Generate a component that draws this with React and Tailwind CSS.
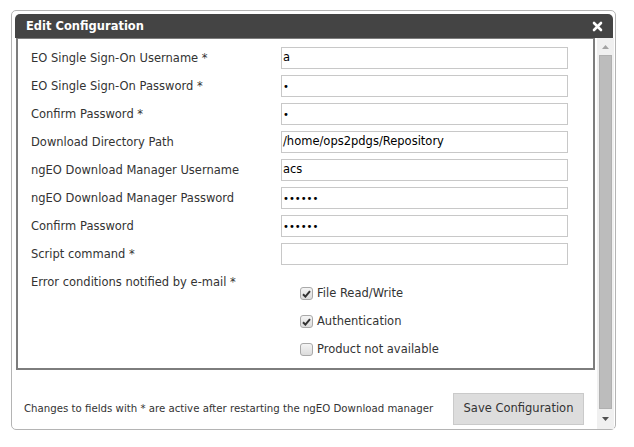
import React from 'react'

const rows = [
  { label: 'EO Single Sign-On Username *', value: 'a' },
  { label: 'EO Single Sign-On Password *', value: '•', secret: true },
  { label: 'Confirm Password *', value: '•', secret: true },
  { label: 'Download Directory Path', value: '/home/ops2pdgs/Repository' },
  { label: 'ngEO Download Manager Username', value: 'acs' },
  { label: 'ngEO Download Manager Password', value: '••••••', secret: true },
  { label: 'Confirm Password', value: '••••••', secret: true },
  { label: 'Script command *', value: '' },
]

const checks = [
  { label: 'File Read/Write', checked: true },
  { label: 'Authentication', checked: true },
  { label: 'Product not available', checked: false },
]

function Check({ checked }) {
  return (
    <div className="w-[13px] h-[13px] rounded-[3px] border border-[#a9a9a9] bg-gradient-to-b from-[#f4f4f4] to-[#dcdcdc] flex items-center justify-center">
      {checked && (
        <svg width="9" height="8" viewBox="0 0 9 8">
          <path d="M1 4.2 L3.4 6.6 L8 1.2" fill="none" stroke="#333" strokeWidth="2" />
        </svg>
      )}
    </div>
  )
}

export default function App() {
  return (
    <div className="w-[634px] h-[447px] bg-white pt-[10px] pl-[11px] font-['DejaVu_Sans',Verdana,sans-serif] text-[#333]">
      <div className="w-[605px] h-[420px] border border-[#b4b4b4] rounded-[5px] pl-[3px] pt-[3px] flex flex-col">
        {/* title bar */}
        <div className="h-[24px] mr-[2px] bg-[#444] rounded-t-[5px] flex items-center justify-between pl-[11px] pr-[10px]">
          <span className="text-white font-bold text-[11.5px] pt-[1px]">Edit Configuration</span>
          <svg width="11" height="11" viewBox="0 0 11 11">
            <path d="M2 2 L9 9 M9 2 L2 9" stroke="#fff" strokeWidth="2.6" strokeLinecap="round" />
          </svg>
        </div>

        <div className="flex flex-1 min-h-0">
          {/* scroll content */}
          <div className="w-[582px] flex flex-col">
            <div className="ml-[1px] mr-[2px] h-[332px] border-2 border-t border-[#7d7d7d] pt-[8px] pl-[13px]">
              {rows.map((r) => (
                <div key={r.label} className="flex items-center h-[22px] mb-[6px]">
                  <div className="w-[250px] text-[11.5px] pt-[1px]">{r.label}</div>
                  <div className={`w-[287px] h-[22px] border border-[#c8c8c8] flex items-center pl-[1px] text-black ${r.secret ? 'text-[10px]' : 'text-[11.5px]'}`}>
                    {r.value}
                  </div>
                </div>
              ))}
              <div className="flex pt-[3px]">
                <div className="w-[269px] text-[11.5px]">Error conditions notified by e-mail *</div>
                <div className="pt-[13px] flex flex-col gap-[15px]">
                  {checks.map((c) => (
                    <div key={c.label} className="flex items-center gap-[4px] h-[13px]">
                      <Check checked={c.checked} />
                      <span className="text-[11.5px]">{c.label}</span>
                    </div>
                  ))}
                </div>
              </div>
            </div>
            <div className="flex items-center justify-between pl-[9px] pr-[13px] pt-[23px]">
              <span className="text-[10.2px]">Changes to fields with * are active after restarting the ngEO Download manager</span>
              <div className="w-[131px] h-[32px] bg-[#dddddd] border border-[#cacaca] flex items-center justify-center text-[11.5px]">
                Save Configuration
              </div>
            </div>
          </div>

          {/* scrollbar */}
          <div className="w-[17px] bg-[#f0f0f0] flex flex-col items-center">
            <div className="h-[17px] flex items-center justify-center">
              <svg width="7" height="4" viewBox="0 0 7 4"><path d="M0 4 L3.5 0 L7 4 Z" fill="#a3a3a3" /></svg>
            </div>
            <div className="w-[13px] flex-1 bg-[#bcbcbc] border border-[#b0b0b0]" />
            <div className="h-[20px] flex items-center justify-center">
              <svg width="7" height="4" viewBox="0 0 7 4"><path d="M0 0 L7 0 L3.5 4 Z" fill="#505050" /></svg>
            </div>
          </div>
        </div>
      </div>
    </div>
  )
}
